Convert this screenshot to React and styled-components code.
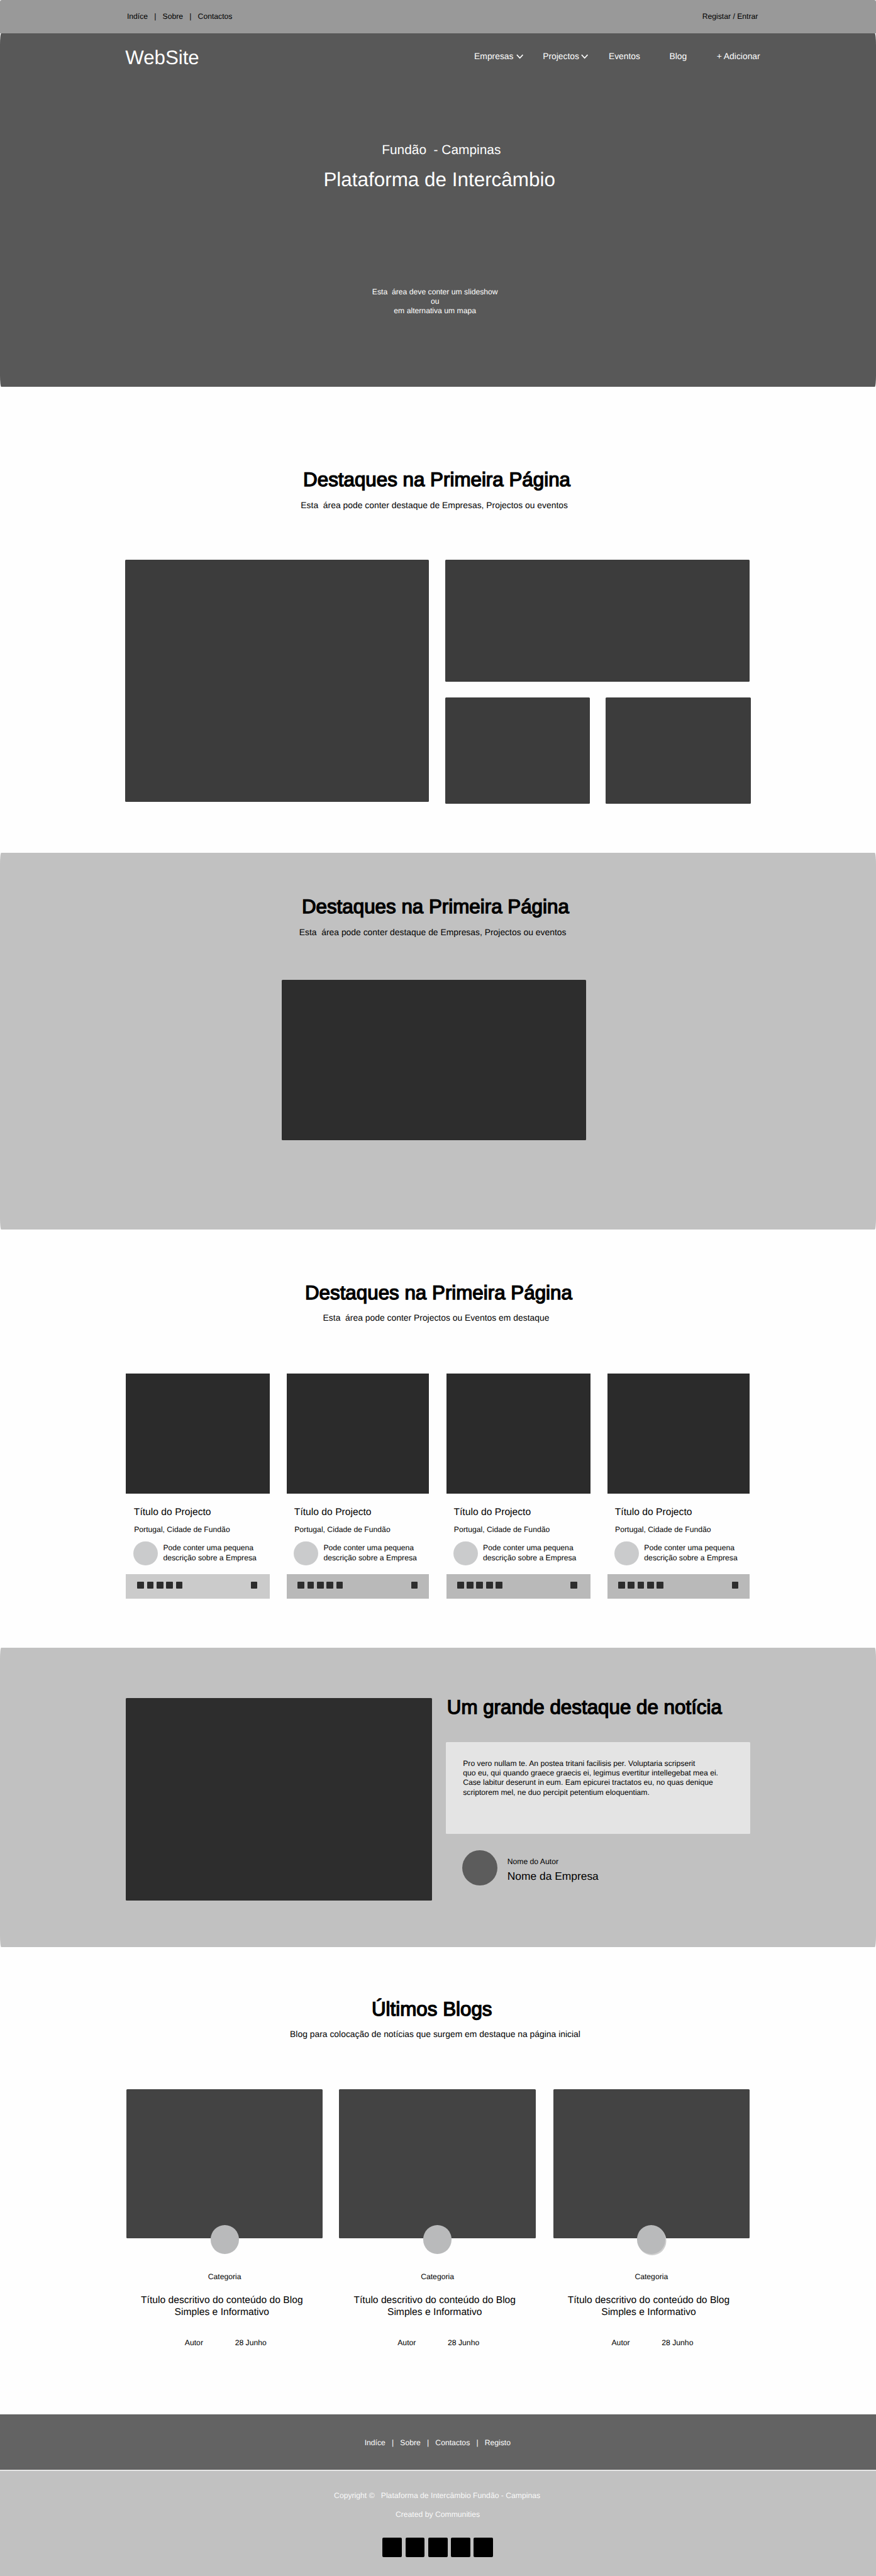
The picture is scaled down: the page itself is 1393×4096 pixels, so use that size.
import React from "react";
import styled, { createGlobalStyle } from "styled-components";

// Design units (1600 wide artboard) to CSS pixels.
const u = (n) => `${+(n * 0.87066).toFixed(3)}px`;

const GlobalStyle = createGlobalStyle`
  *, *::before, *::after { box-sizing: border-box; }
  html, body { margin: 0; padding: 0; background: #fefefe; }
  body {
    font-family: "Liberation Sans", Arial, Helvetica, sans-serif;
    color: #000;
    text-rendering: geometricPrecision;
  }
  h1, h2, h3, p { margin: 0; font-weight: 400; }
`;

const Page = styled.div`
  width: 1393px;
  height: 4096px;
  display: flex;
  flex-direction: column;
  overflow: hidden;
`;

/* ---------- text ---------- */

const Small = styled.p`
  font-size: ${u(14.02)};
  line-height: ${u(17.6)};
  white-space: pre;
`;

const Heading = styled.h2`
  font-size: ${u(36)};
  line-height: ${u(44)};
  white-space: pre;
  -webkit-text-stroke: 1.4px #000;
  margin-left: ${(p) => u(p.$left || 0)};
`;

const Lead = styled.p`
  font-size: ${u(15.97)};
  line-height: ${u(20)};
  white-space: pre;
  margin-top: ${(p) => u(p.$top)};
  margin-left: ${(p) => u(p.$left)};
`;

/* ---------- header ---------- */

const TopBar = styled.header`
  flex: none;
  height: ${u(61)};
  padding: ${u(21.8)} ${u(215.5)} 0 ${u(231.9)};
  display: flex;
  justify-content: space-between;
  background: #999;
  border-radius: 3px 3px 0 0;
`;

const Hero = styled.section`
  flex: none;
  height: ${u(645.7)};
  display: flex;
  flex-direction: column;
  background: #585858;
  color: #fff;
  border-radius: 2px / 18px;
`;

const NavBar = styled.div`
  height: ${u(80)};
  padding: ${u(22.8)} ${u(210)} 0 ${u(228.8)};
  display: flex;
  justify-content: space-between;
`;

const Brand = styled.h1`
  font-size: ${u(35.9)};
  line-height: ${u(44)};
`;

const Menu = styled.nav`
  display: flex;
  padding-top: ${u(9.1)};
`;

const MenuItem = styled.a`
  display: flex;
  width: ${(p) => u(p.$width)};
  font-size: ${u(15.95)};
  line-height: ${u(20)};
  white-space: pre;
`;

const Chevron = styled.svg`
  flex: none;
  width: ${u(13)};
  height: ${u(10)};
  margin: ${u(6.4)} 0 0 ${(p) => u(p.$gap)};
`;

const HeroPlace = styled.p`
  margin: ${u(119.4)} 0 0 ${u(697.4)};
  font-size: ${u(24)};
  line-height: ${u(28)};
  white-space: pre;
`;

const HeroTitle = styled.h2`
  margin: ${u(18.5)} 0 0 ${u(590.8)};
  font-size: ${u(36.1)};
  line-height: ${u(44)};
  white-space: pre;
`;

const HeroNote = styled(Small)`
  margin: ${u(173.8)} 0 0 ${u(679)};
  width: ${u(231)};
  text-align: center;
`;

/* ---------- sections ---------- */

const Section = styled.section`
  flex: none;
  display: flex;
  flex-direction: column;
  height: ${(p) => u(p.$height)};
  padding-top: ${(p) => u(p.$top)};
  ${(p) => p.$shaded && "background: #c1c1c1; border-radius: 2px / 18px;"}
`;

const Block = styled.div`
  background: ${(p) => p.$tone};
  width: ${(p) => u(p.$width)};
  height: ${(p) => u(p.$height)};
  border-radius: 1.5px;
`;

const Mosaic = styled.div`
  display: flex;
  align-items: flex-start;
  gap: ${u(30.1)};
  margin: ${u(88.9)} 0 0 ${u(228.3)};
`;

const MosaicSide = styled.div`
  display: flex;
  flex-direction: column;
  gap: ${u(28.5)};
`;

const MosaicPair = styled.div`
  display: flex;
  gap: ${u(28.8)};
`;

const Showcase = styled.div`
  margin: ${u(76.9)} 0 0 ${u(514.3)};
`;

/* ---------- project cards ---------- */

const ProjectRow = styled.div`
  display: flex;
  margin: ${u(90.9)} 0 0 ${u(229.9)};
`;

const ProjectCard = styled.article`
  flex: none;
  width: ${(p) => u(p.$width)};
  margin-right: ${(p) => u(p.$gap)};
`;

const ProjectImage = styled.div`
  height: ${u(219.7)};
  background: #2b2b2b;
`;

const ProjectBody = styled.div`
  height: ${u(147.6)};
  padding: ${u(22.8)} 0 0 ${(p) => u(p.$inset)};
`;

const ProjectTitle = styled.h3`
  font-size: ${u(18)};
  line-height: ${u(22)};
  padding-left: ${u(0.6)};
`;

const ProjectPlace = styled(Small)`
  margin-top: ${u(12.7)};
  padding-left: ${u(1)};
`;

const ProjectCompany = styled.div`
  display: flex;
  align-items: flex-start;
  gap: ${u(9.8)};
  margin-top: ${u(12.2)};

  p { padding-top: ${u(4)}; }
`;

const Dot = styled.div`
  flex: none;
  width: ${(p) => u(p.$size)};
  height: ${(p) => u(p.$size)};
  border-radius: 50%;
  background: ${(p) => p.$tone};
`;

const ProjectBar = styled.div`
  display: flex;
  height: ${u(44.7)};
  padding: ${u(13.8)} 0 0 ${(p) => u(p.$inset + 6.8)};
  gap: ${u(5.3)};
  background: ${(p) => p.$tone};
`;

const Tick = styled.span`
  width: ${u(12.3)};
  height: ${u(12.3)};
  border-radius: 1px;
  background: #2d2d2d;

  &:last-child { margin-left: ${u(119.2)}; }
`;

/* ---------- news ---------- */

const News = styled.div`
  display: flex;
  align-items: flex-start;
  margin-left: ${u(229.6)};
`;

const NewsBody = styled.div`
  margin-left: ${u(26)};
  margin-top: ${u(-4.7)};
`;

const Excerpt = styled.div`
  width: ${u(555.6)};
  height: ${u(167)};
  margin-top: ${u(41)};
  padding: ${u(30.1)} 0 0 ${u(30.8)};
  background: #e4e4e4;
  border-radius: 1.5px;
`;

const Author = styled.div`
  display: flex;
  gap: ${u(18.6)};
  margin: ${u(30.1)} 0 0 ${u(29.1)};
`;

const AuthorNames = styled.div`
  padding-top: ${u(12.5)};
`;

const Company = styled.p`
  margin-top: ${u(5.5)};
  font-size: ${u(20)};
  line-height: ${u(24)};
`;

/* ---------- blog ---------- */

const BlogRow = styled.div`
  display: flex;
  margin: ${u(90.5)} 0 0 ${u(230.8)};
`;

const BlogCard = styled.article`
  flex: none;
  display: flex;
  flex-direction: column;
  align-items: center;
  width: ${u(358.9)};
  margin-right: ${(p) => u(p.$gap)};
`;

const BlogAvatar = styled(Dot)`
  margin-top: ${u(-23.2)};
  box-shadow: ${(p) => (p.$shadow ? "1.5px 2px 0 #cfcfcf" : "none")};
`;

const Category = styled(Small)`
  margin-top: ${u(34)};
`;

const BlogTitle = styled.h3`
  margin: ${u(22.4)} ${u(10)} 0 0;
  font-size: ${u(18)};
  line-height: ${u(22.2)};
  text-align: center;
  white-space: pre;
`;

const Byline = styled.div`
  display: flex;
  gap: ${u(58.2)};
  margin: ${u(36)} 0 0 ${u(3.8)};
`;

/* ---------- footer ---------- */

const FooterNav = styled.nav`
  flex: none;
  height: ${u(102)};
  padding: ${u(43.8)} 0 0 ${u(665.8)};
  background: #636363;
  color: #fff;
`;

const Footer = styled.footer`
  flex: 1;
  border-top: 2px solid #e6e6e6;
  background: #c1c1c1;
  color: #fafafa;
`;

const Copyright = styled(Small)`
  margin: ${u(36.6)} 0 0 ${u(610)};
`;

const Credit = styled(Small)`
  margin: ${u(16.1)} 0 0 ${u(722.4)};
`;

const Socials = styled.div`
  display: flex;
  gap: ${u(6.35)};
  margin: ${u(33.1)} 0 0 ${u(698.8)};
`;

const Social = styled.span`
  width: ${u(35.3)};
  height: ${u(35.3)};
  border-radius: 2px;
  background: #000;
`;

const Caret = ({ gap }) => (
  <Chevron $gap={gap} viewBox="0 0 13 10" fill="none" stroke="#fff" strokeWidth="1.8">
    <path d="M1 1.3 L6.5 7.3 L12 1.3" />
  </Chevron>
);

const projects = [
  { width: 262.7, gap: 30.8, inset: 14, tone: "#cbcbcb" },
  { width: 260.2, gap: 31.8, inset: 13.4, tone: "#b9b9b9" },
  { width: 262.6, gap: 31.4, inset: 12.7, tone: "#b9b9b9" },
  { width: 260.1, gap: 0, inset: 13.1, tone: "#b9b9b9" },
];

const posts = [{ gap: 29.8 }, { gap: 31.9 }, { gap: 0, shadow: true }];

export default function App() {
  return (
    <Page>
      <GlobalStyle />

      <TopBar>
        <Small>{"Indíce   |   Sobre   |   Contactos"}</Small>
        <Small>Registar / Entrar</Small>
      </TopBar>

      <Hero>
        <NavBar>
          <Brand>WebSite</Brand>
          <Menu>
            <MenuItem $width={125.3}>Empresas<Caret gap={4.8} /></MenuItem>
            <MenuItem $width={120.3}>Projectos<Caret gap={3} /></MenuItem>
            <MenuItem $width={111}>Eventos</MenuItem>
            <MenuItem $width={86.3}>Blog</MenuItem>
            <MenuItem $width={81}>+ Adicionar</MenuItem>
          </Menu>
        </NavBar>
        <HeroPlace>{"Fundão  - Campinas"}</HeroPlace>
        <HeroTitle>Plataforma de Intercâmbio</HeroTitle>
        <HeroNote>{"Esta  área deve conter um slideshow\nou\nem alternativa um mapa"}</HeroNote>
      </Hero>

      <Section $height={850.7} $top={147.7}>
        <Heading $left={553.7}>Destaques na Primeira Página</Heading>
        <Lead $top={14.7} $left={549.4}>
          {"Esta  área pode conter destaque de Empresas, Projectos ou eventos"}
        </Lead>
        <Mosaic>
          <Block $tone="#3c3c3c" $width={555.2} $height={442.5} />
          <MosaicSide>
            <Block $tone="#3c3c3c" $width={555.9} $height={223} />
            <MosaicPair>
              <Block $tone="#3c3c3c" $width={264.2} $height={194} />
              <Block $tone="#3c3c3c" $width={264.4} $height={194} />
            </MosaicPair>
          </MosaicSide>
        </Mosaic>
      </Section>

      <Section $height={688.6} $top={76.8} $shaded>
        <Heading $left={551.2}>Destaques na Primeira Página</Heading>
        <Lead $top={14.9} $left={546.4}>
          {"Esta  área pode conter destaque de Empresas, Projectos ou eventos"}
        </Lead>
        <Showcase>
          <Block $tone="#2d2d2d" $width={556.1} $height={292} />
        </Showcase>
      </Section>

      <Section $height={763.8} $top={93.4}>
        <Heading $left={557}>Destaques na Primeira Página</Heading>
        <Lead $top={13.7} $left={589.9}>
          {"Esta  área pode conter Projectos ou Eventos em destaque"}
        </Lead>
        <ProjectRow>
          {projects.map((p, i) => (
            <ProjectCard key={i} $width={p.width} $gap={p.gap}>
              <ProjectImage />
              <ProjectBody $inset={p.inset}>
                <ProjectTitle>Título do Projecto</ProjectTitle>
                <ProjectPlace>Portugal, Cidade de Fundão</ProjectPlace>
                <ProjectCompany>
                  <Dot $size={44.3} $tone="#cacbcc" />
                  <Small>{"Pode conter uma pequena\ndescrição sobre a Empresa"}</Small>
                </ProjectCompany>
              </ProjectBody>
              <ProjectBar $inset={p.inset} $tone={p.tone}>
                {[0, 1, 2, 3, 4, 5].map((n) => (
                  <Tick key={n} />
                ))}
              </ProjectBar>
            </ProjectCard>
          ))}
        </ProjectRow>
      </Section>

      <Section $height={545.7} $top={91.9} $shaded>
        <News>
          <Block $tone="#2d2d2d" $width={559.2} $height={368.9} />
          <NewsBody>
            <Heading $left={1.6}>Um grande destaque de notícia</Heading>
            <Excerpt>
              <Small>
                {"Pro vero nullam te. An postea tritani facilisis per. Voluptaria scripserit\nquo eu, qui quando graece graecis ei, legimus evertitur intellegebat mea ei.\nCase labitur deserunt in eum. Eam epicurei tractatos eu, no quas denique\nscriptorem mel, ne duo percipit petentium eloquentiam."}
              </Small>
            </Excerpt>
            <Author>
              <Dot $size={64.1} $tone="#5c5c5c" />
              <AuthorNames>
                <Small>Nome do Autor</Small>
                <Company>Nome da Empresa</Company>
              </AuthorNames>
            </Author>
          </NewsBody>
        </News>
      </Section>

      <Section $height={853.5} $top={91.9}>
        <Heading $left={678.8}>Últimos Blogs</Heading>
        <Lead $top={14.1} $left={529.6}>
          Blog para colocação de notícias que surgem em destaque na página inicial
        </Lead>
        <BlogRow>
          {posts.map((p, i) => (
            <BlogCard key={i} $gap={p.gap}>
              <Block $tone="#434343" $width={358.9} $height={271.4} />
              <BlogAvatar $size={52} $tone="#b9babb" $shadow={p.shadow} />
              <Category>Categoria</Category>
              <BlogTitle>{"Título descritivo do conteúdo do Blog\nSimples e Informativo"}</BlogTitle>
              <Byline>
                <Small>Autor</Small>
                <Small>28 Junho</Small>
              </Byline>
            </BlogCard>
          ))}
        </BlogRow>
      </Section>

      <FooterNav>
        <Small>{"Indíce   |   Sobre   |   Contactos   |   Registo"}</Small>
      </FooterNav>
      <Footer>
        <Copyright>{"Copyright ©   Plataforma de Intercâmbio Fundão - Campinas"}</Copyright>
        <Credit>Created by Communities</Credit>
        <Socials>
          {[0, 1, 2, 3, 4].map((n) => (
            <Social key={n} />
          ))}
        </Socials>
      </Footer>
    </Page>
  );
}
